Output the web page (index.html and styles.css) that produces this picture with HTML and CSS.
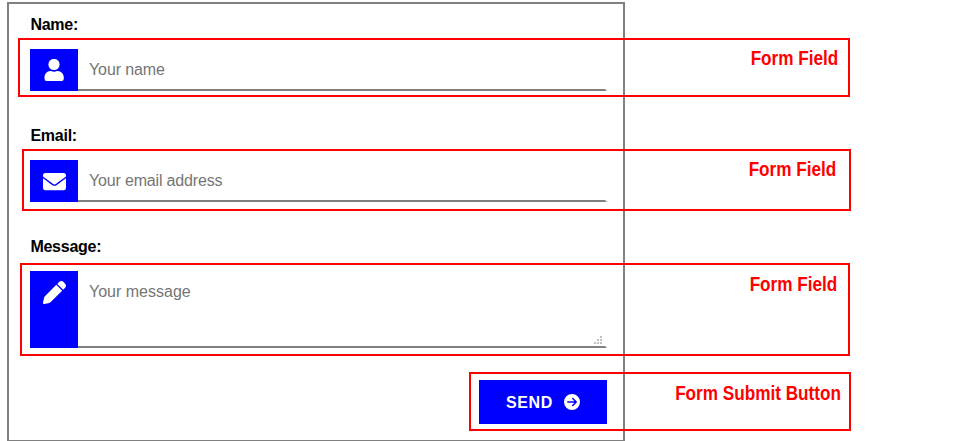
FILE: index.html
```html
<!DOCTYPE html>
<html lang="en">
<head>
<meta charset="utf-8">
<title>Contact form</title>
<link rel="stylesheet" href="styles.css">
</head>
<body>
<form class="card">
  <label class="label" for="name">Name:</label>
  <div class="field">
    <span class="icon"><svg class="icon-user" width="20" height="22" viewBox="0 0 20 22"><circle cx="10" cy="5.5" r="5.6"/><path d="M6.500 12h.5a7.500 7.500 0 0 0 6 0h.5C17.300 12 19.800 15 19.800 18.500v1.300a2.200 2.200 0 0 1-2.200 2.200H2.700a2.200 2.200 0 0 1-2.200-2.200V18.500C.5 15 2.800 12 6.500 12z"/></svg></span>
    <input class="control" id="name" type="text" placeholder="Your name">
  </div>
  <label class="label" for="email">Email:</label>
  <div class="field">
    <span class="icon"><svg width="23" height="23" viewBox="0 0 512 512"><path d="M502.3 190.8c3.9-3.1 9.7-.2 9.7 4.7V400c0 26.500-21.500 48-48 48H48c-26.500 0-48-21.500-48-48V195.600c0-5 5.700-7.800 9.700-4.700 22.400 17.400 52.100 39.500 154.100 113.600 21.100 15.400 56.700 47.800 92.200 47.600 35.700.3 72-32.800 92.300-47.600 102-74.100 131.600-96.300 154-113.700zM256 320c23.200.4 56.600-29.200 73.400-41.400 132.700-96.300 142.800-104.700 173.400-128.700 5.800-4.500 9.200-11.500 9.200-18.900v-19c0-26.500-21.500-48-48-48H48c-26.500 0-48 21.500-48 48v19c0 7.400 3.400 14.300 9.200 18.900 30.600 23.900 40.700 32.400 173.400 128.700 16.800 12.200 50.200 41.800 73.400 41.400z"/></svg></span>
    <input class="control control-email" id="email" type="text" placeholder="Your email address">
  </div>
  <label class="label" for="message">Message:</label>
  <div class="field field-tall">
    <span class="icon"><svg width="23" height="23" viewBox="0 0 512 512"><path d="M362.7 19.3L318 64 448 194l44.700-44.700c25-25 25-65.500 0-90.500L453.300 19.300c-25-25-65.500-25-90.500 0zM296 86L42 340c-10.400 10.400-16 20-18 34L1 481.200C-1.500 489.700 .8 498.800 7 505s15.300 8.500 23.700 6.100L138 488c14.100-3 24-8 34-18L426 216z"/></svg></span>
    <textarea class="control" id="message" placeholder="Your message"></textarea>
    <svg class="grip" width="8" height="8" viewBox="0 0 8 8"><path d="M6 0h2v2H6zM3 3h2v2H3zM6 3h2v2H6zM0 6h2v2H0zM3 6h2v2H3zM6 6h2v2H6z"/></svg>
  </div>
  <button class="send" type="button"><span>SEND</span><svg width="16" height="16" viewBox="0 0 512 512"><path d="M0 256a256 256 0 1 0 512 0A256 256 0 1 0 0 256zM297 385c-9.4 9.4-24.6 9.4-33.9 0s-9.4-24.6 0-33.9l71-71L120 280c-13.3 0-24-10.7-24-24s10.7-24 24-24l214.1 0-71-71c-9.4-9.4-9.4-24.6 0-33.9s24.6-9.4 33.9 0L409 239c9.4 9.4 9.4 24.6 0 33.9L297 385z"/></svg></button>
</form>
<div class="note note-name"><span>Form Field</span></div>
<div class="note note-email"><span>Form Field</span></div>
<div class="note note-message"><span>Form Field</span></div>
<div class="note note-send"><span>Form Submit Button</span></div>
</body>
</html>
```
FILE: styles.css
```css
* { box-sizing: border-box; }

body {
  margin: 0;
  height: 441px;
  padding: 2px 0 0 7px;
  overflow: hidden;
  position: relative;
  background: #fff;
  font: 16px/20px "Liberation Sans", Arial, sans-serif;
}

.card {
  display: flex;
  flex-direction: column;
  width: 618px;
  height: 440px;
  padding: 11px 16px 0 21px;
  border: 2px solid gray;
}

.label {
  height: 20px;
  padding-left: 0.4px;
  font-weight: bold;
  letter-spacing: -0.25px;
  color: #000;
}

.field {
  display: flex;
  position: relative;
  height: 42px;
  margin: 14px 0 35px;
}

.field-tall {
  height: 77px;
  margin-bottom: 32px;
}

.icon {
  display: flex;
  justify-content: center;
  width: 48px;
  padding-top: 10px;
  background: #00f;
}

.icon svg, .send svg { fill: #fff; }

.control {
  flex: 1;
  min-width: 0;
  margin: 0;
  padding: 8px 10px 8px 11px;
  border: 2px solid #fff;
  border-bottom-color: gray;
  border-left-width: 0;
  border-radius: 0;
  outline: 0;
  resize: none;
  background: #fff;
  font: inherit;
  letter-spacing: -0.1px;
}

.control-email { letter-spacing: -0.17px; }

.control::placeholder { color: #757575; opacity: 1; }

textarea.control { padding-top: 9px; letter-spacing: 0; }

.grip {
  position: absolute;
  right: 5px;
  bottom: 4px;
  fill: #c0c0c0;
}

.send {
  display: flex;
  align-items: center;
  align-self: flex-end;
  gap: 11px;
  width: 128px;
  height: 44px;
  padding: 0 0 0 27px;
  border: 0;
  background: #00f;
  color: #fff;
  font: bold 16px/20px "Liberation Sans", Arial, sans-serif;
  letter-spacing: 0.6px;
}

.send span { padding-top: 2px; }

.note {
  position: absolute;
  display: flex;
  justify-content: flex-end;
  border: 2px solid red;
  color: red;
  font: bold 21px/24px "Liberation Sans", Arial, sans-serif;
  white-space: nowrap;
  pointer-events: none;
}

.note span {
  transform: scaleX(0.817);
  transform-origin: right top;
}

.note-name { left: 18px; top: 38px; width: 832px; height: 59px; padding: 6px 10px 0 0; }
.note-email { left: 22px; top: 149px; width: 829px; height: 62px; padding: 6px 13px 0 0; }
.note-message { left: 20px; top: 263px; width: 830px; height: 93px; padding: 7px 11px 0 0; }
.note-send { left: 469px; top: 372px; width: 382px; height: 59px; padding: 7px 8px 0 0; }
```
